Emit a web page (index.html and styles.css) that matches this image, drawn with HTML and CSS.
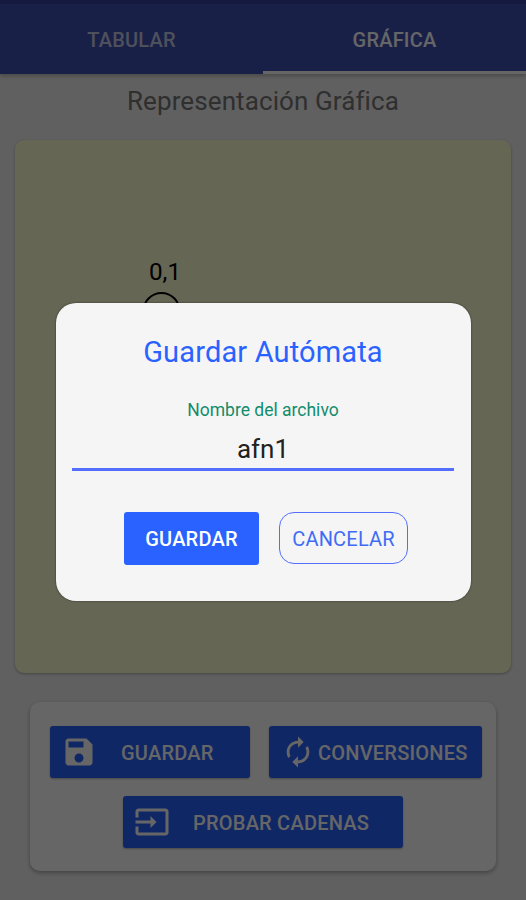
FILE: index.html
```html
<!DOCTYPE html>
<html lang="es">
<head>
    <meta charset="UTF-8">
    <meta name="viewport" content="width=device-width, initial-scale=1.0">
    <title>Autómatas</title>
    <link rel="stylesheet" href="styles.css">
</head>
<body>
    <div class="tabs">
        <div class="tab">TABULAR</div>
        <div class="tab active">GRÁFICA</div>
    </div>

    <h2 class="titulo">Representación Gráfica</h2>

    <div class="lienzo">
        <svg width="496" height="533" viewBox="0 0 496 533">
            <text x="134" y="140" textLength="32" lengthAdjust="spacingAndGlyphs">0,1</text>
            <circle cx="146.5" cy="171" r="18" fill="none" stroke="#000" stroke-width="2"/>
        </svg>
    </div>

    <div class="acciones">
        <button class="btn btn-guardar">
            <svg width="36" height="36" viewBox="0 0 24 24"><path d="M17 3H5c-1.11 0-2 .9-2 2v14c0 1.1.89 2 2 2h14c1.1 0 2-.9 2-2V7l-4-4zm-5 16c-1.66 0-3-1.34-3-3s1.34-3 3-3 3 1.34 3 3-1.34 3-3 3zm3-10H5V5h10v4z"/></svg>
            <span>GUARDAR</span>
        </button>
        <button class="btn btn-conversiones">
            <svg width="34" height="34" viewBox="0 0 24 24"><path d="M12 6v3l4-4-4-4v3c-4.42 0-8 3.58-8 8 0 1.57.46 3.03 1.24 4.26L6.7 14.8c-.45-.83-.7-1.79-.7-2.8 0-3.31 2.69-6 6-6zm6.76 1.74L17.3 9.2c.44.84.7 1.79.7 2.8 0 3.31-2.69 6-6 6v-3l-4 4 4 4v-3c4.42 0 8-3.58 8-8 0-1.57-.46-3.03-1.24-4.26z"/></svg>
            <span>CONVERSIONES</span>
        </button>
        <button class="btn btn-probar">
            <svg width="36" height="36" viewBox="0 0 24 24"><path d="M21 3.01H3c-1.1 0-2 .9-2 2V9h2V4.99h18v14.03H3V15H1v4.01c0 1.1.9 1.98 2 1.98h18c1.1 0 2-.88 2-1.98v-14c0-1.11-.9-2-2-2zM11 16l4-4-4-4v3H1v2h10v3z"/></svg>
            <span>PROBAR CADENAS</span>
        </button>
    </div>

    <div class="overlay">
        <div class="dialogo">
            <h3>Guardar Autómata</h3>
            <label for="nombre">Nombre del archivo</label>
            <input id="nombre" type="text" value="afn1">
            <div class="botones">
                <button class="aceptar">GUARDAR</button>
                <button class="cancelar">CANCELAR</button>
            </div>
        </div>
    </div>
</body>
</html>
```
FILE: styles.css
```css
* {
    box-sizing: border-box;
}
body {
    margin: 0;
    height: 900px;
    overflow: hidden;
    background-color: #f0f0f0;
    font-family: Roboto, sans-serif;
}
button {
    font-family: inherit;
    border: none;
    padding: 0;
    cursor: pointer;
}
.tabs {
    display: flex;
    height: 74px;
    border-top: 4px solid #303f9f;
    background-color: #3f51b5;
    box-shadow: 0 2px 4px rgba(0,0,0,0.25);
}
.tab {
    flex: 1;
    display: flex;
    align-items: center;
    justify-content: center;
    padding-top: 5px;
    border-bottom: 3px solid transparent;
    color: rgba(255,255,255,0.7);
    font-size: 20px;
    font-weight: 500;
    letter-spacing: 0.2px;
}
.tab.active {
    color: white;
    border-bottom-color: white;
}
.titulo {
    margin: 0;
    height: 66px;
    padding-top: 11px;
    text-align: center;
    color: #757575;
    font-size: 26px;
    font-weight: 400;
    line-height: 32px;
    letter-spacing: 0.1px;
}
.lienzo {
    margin: 0 15px;
    height: 533px;
    border-radius: 9px;
    background-color: #fdffd2;
    box-shadow: 0 1px 3px rgba(0,0,0,0.3);
}
.lienzo svg {
    display: block;
}
.lienzo text {
    font-size: 24px;
}
.acciones {
    display: flex;
    flex-wrap: wrap;
    justify-content: center;
    align-content: flex-start;
    gap: 18px 19px;
    margin: 29px 30px 0;
    height: 169px;
    padding-top: 24px;
    border-radius: 10px;
    background-color: white;
    box-shadow: 0 2px 4px rgba(0,0,0,0.3);
}
.btn {
    display: flex;
    align-items: center;
    height: 52px;
    border-radius: 3px;
    background-color: #2962ff;
    color: white;
    font-size: 20px;
    font-weight: 500;
    letter-spacing: 0.22px;
    box-shadow: 0 1px 2px rgba(0,0,0,0.3);
}
.btn svg {
    fill: white;
    flex: none;
}
.btn span {
    padding-top: 2px;
}
.btn-guardar {
    width: 200px;
    margin-left: 6px;
    padding-left: 11px;
    gap: 24px;
}
.btn-conversiones {
    width: 213px;
    padding-left: 12px;
    gap: 3px;
}
.btn-probar {
    width: 280px;
    padding-left: 11px;
    gap: 23px;
}
.overlay {
    position: absolute;
    inset: 0;
    display: flex;
    align-items: flex-start;
    justify-content: center;
    padding-top: 303px;
    background-color: rgba(0,0,0,0.6);
}
.dialogo {
    display: flex;
    flex-direction: column;
    align-items: center;
    width: 415px;
    height: 298px;
    padding: 32px 16px 0;
    border-radius: 20px;
    background-color: #f5f5f5;
    box-shadow: 0 0 2px rgba(0,0,0,0.6);
}
.dialogo h3 {
    margin: 0;
    color: #2962ff;
    font-size: 29px;
    font-weight: 400;
    line-height: 34px;
    letter-spacing: 0.15px;
}
.dialogo label {
    margin-top: 31px;
    color: #128c6c;
    font-size: 17.5px;
    line-height: 20px;
}
.dialogo input {
    width: 382px;
    height: 42px;
    margin-top: 9px;
    padding: 1px 0 0;
    border: none;
    border-bottom: 3px solid #536dfe;
    outline: none;
    background: none;
    text-align: center;
    color: #212121;
    font-family: inherit;
    font-size: 26px;
}
.botones {
    display: flex;
    gap: 20px;
    margin-top: 41px;
    margin-left: 6px;
}
.aceptar {
    width: 135px;
    height: 53px;
    padding-top: 1px;
    border-radius: 3px;
    background-color: #2962ff;
    color: white;
    font-size: 20px;
    font-weight: 500;
    letter-spacing: 0.2px;
}
.cancelar {
    width: 129px;
    height: 52px;
    padding-top: 2px;
    border: 1px solid #536dfe;
    border-radius: 15px;
    background: none;
    color: #3f6cf5;
    font-size: 20px;
    letter-spacing: 0.2px;
}
```
